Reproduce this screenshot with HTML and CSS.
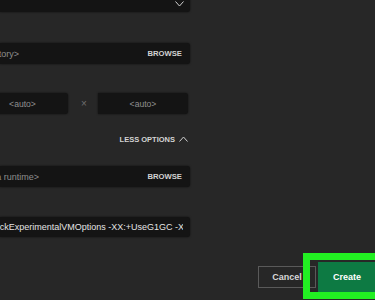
FILE: index.html
```html
<!DOCTYPE html>
<html>
<head>
<meta charset="utf-8">
<link rel="stylesheet" href="styles.css">
</head>
<body>
<div class="form">
  <div class="field dropdown">
    <svg class="chev" width="9" height="6" viewBox="0 0 9 6"><polyline points="0.5,0.5 4.5,5 8.5,0.5" fill="none" stroke="#cfcfcf" stroke-width="1"/></svg>
  </div>
  <div class="field gap-dir">
    <div class="value placeholder w-dir"><span>&lt;Use default directory&gt;</span></div>
    <span class="browse">BROWSE</span>
  </div>
  <div class="res-row">
    <div class="field res-left"><span class="auto">&lt;auto&gt;</span></div>
    <span class="times">×</span>
    <div class="field res-right"><span class="auto">&lt;auto&gt;</span></div>
  </div>
  <div class="less-row">
    <span class="less">LESS OPTIONS</span>
    <svg class="up" width="9" height="6" viewBox="0 0 9 6"><polyline points="0.5,5.5 4.5,1 8.5,5.5" fill="none" stroke="#cfcfcf" stroke-width="1"/></svg>
  </div>
  <div class="field gap-java">
    <div class="value placeholder w-java"><span>&lt;Use bundled Java runtime&gt;</span></div>
    <span class="browse">BROWSE</span>
  </div>
  <div class="field gap-jvm">
    <div class="value jvm"><span class="jvm-text">-Xmx2G -XX:+UnlockExperimentalVMOptions -XX:+UseG1GC -XX:G1NewSizePercent=20</span></div>
  </div>
</div>
<div class="footer">
  <button class="cancel">Cancel</button>
  <button class="create">Create</button>
</div>
<div class="highlight"></div>
</body>
</html>
```
FILE: styles.css
```css
html, body {
  margin: 0;
  padding: 0;
}
body {
  width: 375px;
  height: 300px;
  background: #272727;
  overflow: hidden;
  position: relative;
  font-family: "Liberation Sans", Arial, sans-serif;
}
.form {
  display: flex;
  flex-direction: column;
  width: 190px;
}
.field {
  display: flex;
  align-items: center;
  height: 21px;
  background: #141414;
  border-radius: 0 3px 3px 0;
  box-shadow: 0 0 2px rgba(0, 0, 0, 0.7);
  box-sizing: border-box;
}
.dropdown {
  margin-top: -10px;
  height: 22px;
  align-items: flex-start;
  justify-content: flex-end;
  padding-top: 11px;
  padding-right: 6px;
}
.chev, .up {
  display: block;
}
.gap-dir {
  margin-top: 31px;
}
.value {
  display: flex;
  overflow: hidden;
  white-space: nowrap;
  font-size: 9px;
  flex: 0 0 auto;
}
.placeholder {
  justify-content: flex-end;
  color: #8e8e8e;
}
.w-dir {
  width: 19px;
}
.w-java {
  width: 39px;
}
.browse {
  margin-left: auto;
  margin-right: 8px;
  font-size: 7.7px;
  font-weight: bold;
  color: #d2d2d2;
}
.res-row {
  display: flex;
  align-items: center;
  margin-top: 29px;
  height: 21px;
}
.res-left {
  margin-left: -23px;
  width: 91px;
  justify-content: center;
}
.res-right {
  margin-left: auto;
  width: 90px;
  margin-right: 2px;
  justify-content: center;
}
.times {
  margin-left: 13px;
  font-size: 10px;
  color: #6f6f6f;
}
.auto {
  font-size: 8.6px;
  color: #8f8f8f;
}
.less-row {
  display: flex;
  align-items: center;
  justify-content: flex-end;
  gap: 4px;
  margin-top: 19px;
  height: 12px;
  padding-right: 2px;
}
.less {
  font-size: 7.5px;
  font-weight: bold;
  color: #d4d4d4;
}
.gap-java {
  margin-top: 21px;
}
.gap-jvm {
  margin-top: 30px;
  height: 20px;
}
.jvm {
  width: 183px;
  font-size: 9px;
  color: #e4e4e4;
}
.jvm-text {
  margin-left: -77px;
}
.footer {
  display: flex;
  align-items: center;
  gap: 2px;
  margin-top: 25px;
  padding-left: 258px;
  height: 30px;
}
button {
  font-family: "Liberation Sans", Arial, sans-serif;
  font-weight: bold;
  font-size: 9px;
  padding: 0;
  margin: 0;
  flex: 0 0 auto;
}
.cancel {
  width: 58px;
  height: 22px;
  background: transparent;
  border: 1px solid #5a5a5a;
  color: #d8d8d8;
}
.create {
  width: 70px;
  height: 30px;
  background: #0d7a43;
  border: none;
  color: #ffffff;
  text-align: left;
  padding-left: 15px;
}
.highlight {
  position: absolute;
  left: 303px;
  top: 253px;
  width: 90px;
  height: 46px;
  border: 7px solid #22f022;
  box-sizing: border-box;
}
```
